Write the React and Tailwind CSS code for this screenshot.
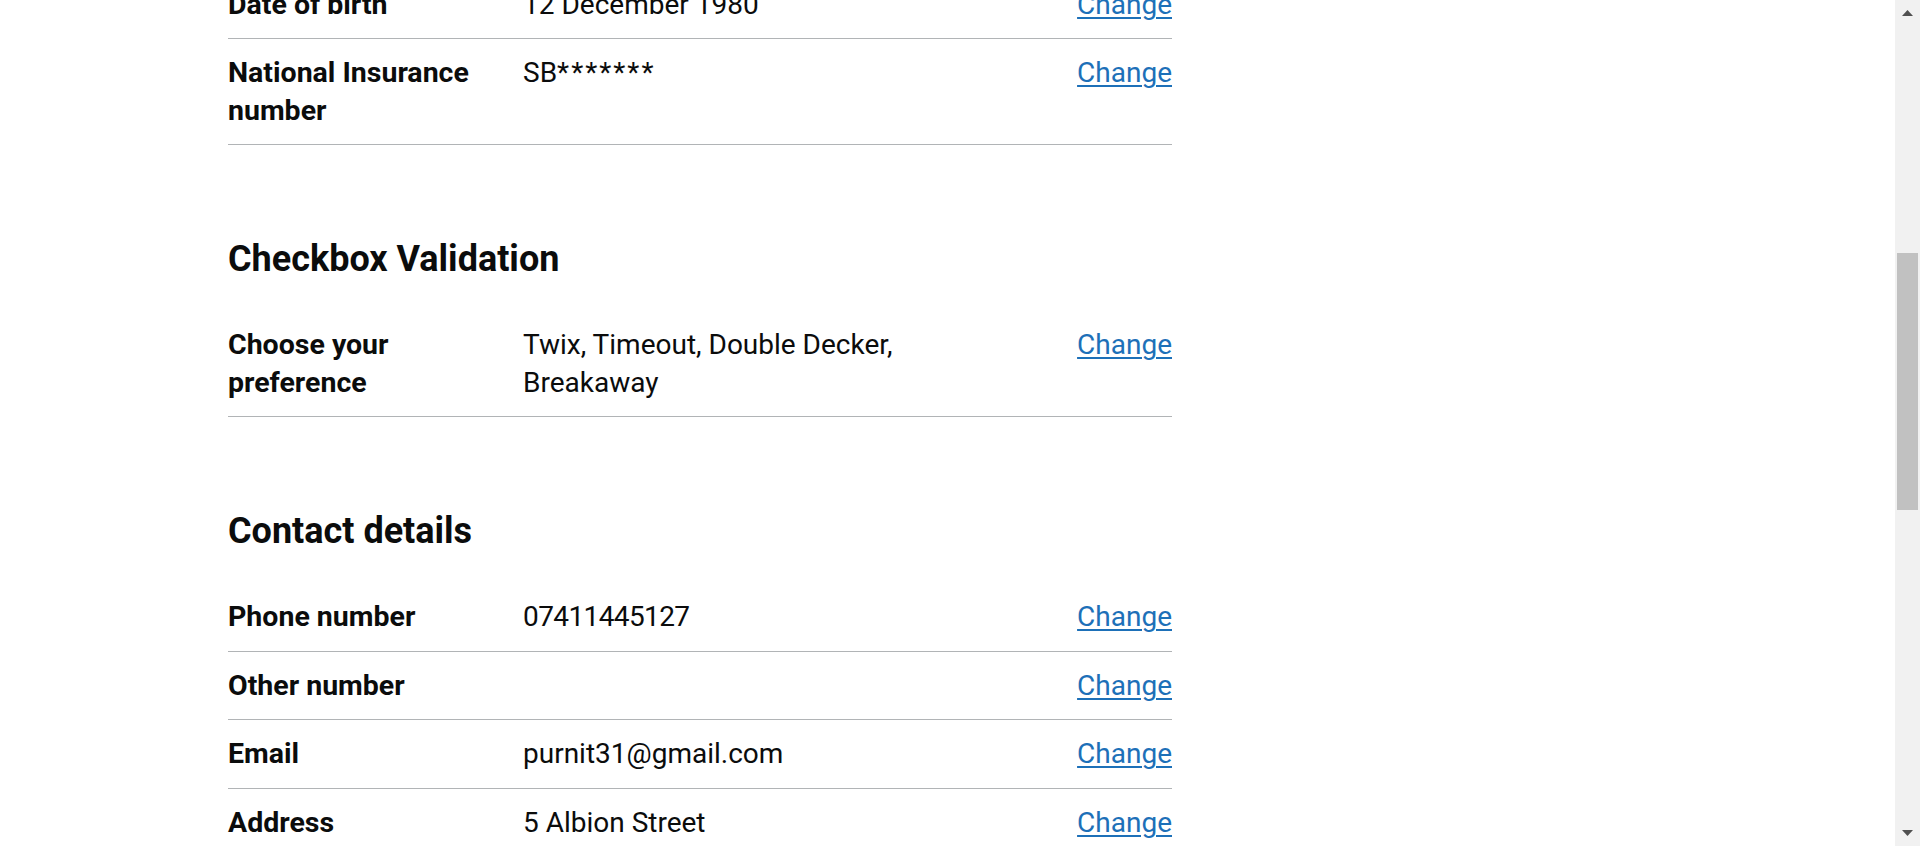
import React from "react";

function Row({ label, value }) {
  return (
    <div className="flex border-b border-[#b1b4b6] py-[15px] leading-[37.5px] text-[#0b0c0c]">
      <div className="w-[295px] shrink-0 pr-[30px] text-[28.5px] font-bold">{label}</div>
      <div className="w-[472px] shrink-0 pr-[30px] text-[28px]">{value}</div>
      <div className="flex-1 text-right text-[28px]">
        <a
          href="#"
          className="text-[#1d70b8] underline decoration-[2px] underline-offset-[3px]"
        >
          Change
        </a>
      </div>
    </div>
  );
}

function Heading({ children }) {
  return (
    <h2 className="pt-[2px] mb-[29px] text-[36px] font-bold leading-[45px] text-[#0b0c0c]">
      {children}
    </h2>
  );
}

function Scrollbar() {
  return (
    <div className="flex w-[25px] shrink-0 flex-col items-center bg-[#f1f1f1] pt-[10px] pb-[10px]">
      <svg width="11" height="6" viewBox="0 0 11 6">
        <polygon points="5.5,0 11,6 0,6" fill="#505050" />
      </svg>
      <div className="mt-[237px] h-[257px] w-[21px] bg-[#c1c1c1]" />
      <div className="flex-1" />
      <svg width="11" height="6" viewBox="0 0 11 6">
        <polygon points="0,0 11,0 5.5,6" fill="#505050" />
      </svg>
    </div>
  );
}

export default function App() {
  return (
    <div className="flex h-[846px] w-full overflow-hidden bg-white font-['Roboto',sans-serif]">
      <div className="flex-1 overflow-hidden">
        <div className="ml-[228px] w-[944px] -mt-[29.5px]">
          <div className="mb-[90px]">
            <Row label="Date of birth" value="12 December 1980" />
            <Row
              label="National Insurance number"
              value={
                <span>
                  SB<span className="tracking-[2px]">*******</span>
                </span>
              }
            />
          </div>

          <Heading>Checkbox Validation</Heading>
          <div className="mb-[90px]">
            <Row
              label="Choose your preference"
              value="Twix, Timeout, Double Decker, Breakaway"
            />
          </div>

          <Heading>Contact details</Heading>
          <div className="mb-[90px]">
            <Row
              label="Phone number"
              value={<span className="tracking-[-0.6px]">07411445127</span>}
            />
            <Row label="Other number" value="" />
            <Row label="Email" value="purnit31@gmail.com" />
            <Row label="Address" value="5 Albion Street" />
          </div>
        </div>
      </div>
      <Scrollbar />
    </div>
  );
}
